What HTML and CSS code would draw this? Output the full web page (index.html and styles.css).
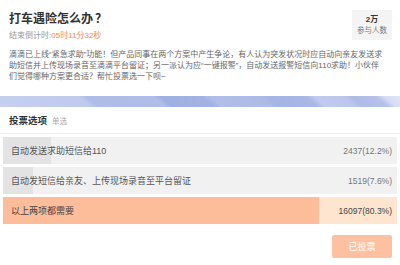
FILE: index.html
```html
<!DOCTYPE html>
<html lang="zh-CN">
<head>
<meta charset="utf-8">
<title>打车遇险怎么办？</title>
<link rel="stylesheet" href="styles.css">
</head>
<body>
<div class="page">
  <header class="head">
    <div class="head-top">
      <div class="title-block">
        <h1 class="title">打车遇险怎么办<span class="qmark">？</span></h1>
        <div class="countdown">结束倒计时:<span class="time">05时11分32秒</span></div>
      </div>
      <div class="stat"><b class="stat-num">2万</b><span class="stat-label">参与人数</span></div>
    </div>
    <p class="desc">滴滴已上线“紧急求助”功能！但产品同事在两个方案中产生争论，有人认为突发状况时应自动向亲友发送求<br>助短信并上传现场录音至滴滴平台留证；另一派认为应“一键报警”，自动发送报警短信向110求助！小伙伴<br>们觉得哪种方案更合适？帮忙投票选一下呗~</p>
  </header>
  <div class="banner"></div>
  <div class="vote-head"><b class="vote-title">投票选项</b><span class="vote-type">单选</span></div>
  <ul class="options">
    <li class="option">
      <div class="bar" style="width:12.2%"></div>
      <span class="opt-text">自动发送求助短信给110</span>
      <span class="opt-count">2437(12.2%)</span>
    </li>
    <li class="option">
      <div class="bar" style="width:7.6%"></div>
      <span class="opt-text">自动发短信给亲友、上传现场录音至平台留证</span>
      <span class="opt-count">1519(7.6%)</span>
    </li>
    <li class="option chosen">
      <div class="bar" style="width:80.3%"></div>
      <span class="opt-text">以上两项都需要</span>
      <span class="opt-count">16097(80.3%)</span>
    </li>
  </ul>
  <div class="actions"><button class="voted">已投票</button></div>
</div>
</body>
</html>
```

FILE: styles.css
```css
* { box-sizing: border-box; }
html, body { margin: 0; padding: 0; background: #fff; }
body {
  font-family: "Liberation Sans", "Noto Sans CJK SC", sans-serif;
  color: #555;
  width: 400px;
  height: 265px;
  overflow: hidden;
}
.head { padding: 10px 8px 0 9px; }
.head-top { display: flex; justify-content: space-between; align-items: flex-start; }
.title {
  margin: 0;
  font-family: "Noto Sans CJK SC", sans-serif;
  font-size: 12px;
  line-height: 16px;
  font-weight: bold;
  color: #333;
}
.qmark { margin-left: 2px; }
.countdown {
  margin-top: 4px;
  font-size: 8px;
  line-height: 12px;
  color: #999;
}
.time { color: #f2895a; }
.stat {
  width: 40px;
  height: 30px;
  background: #f4f4f4;
  display: flex;
  flex-direction: column;
  align-items: center;
  justify-content: center;
  gap: 1px;
}
.stat-num { font-size: 8px; line-height: 10px; color: #333; }
.stat-label { font-size: 7.5px; line-height: 10px; color: #777; }
.desc {
  margin: 7px 0 0;
  font-size: 8px;
  line-height: 11px;
  color: #666;
  white-space: nowrap;
}
.banner {
  margin-top: 14px;
  height: 11px;
  background: linear-gradient(40deg,
    #c6cfee 0%, #c0caed 22%, #afbce8 24%, #b0bde8 40%, #9eafe2 42%, #a2b2e3 52%,
    #b2bee9 54%, #adbae7 66%, #a4b4e4 68%, #a9b7e6 77%, #c2cbee 79%, #bcc6ec 86%,
    #afbce8 88%, #b6c1ea 94%, #d6ddf4 96%, #dfe4f6 100%);
}
.vote-head {
  height: 27px;
  display: flex;
  align-items: center;
  gap: 5px;
  padding-left: 9px;
  border-bottom: 1px solid #efefef;
}
.vote-title { font-size: 9.5px; color: #333; }
.vote-type { font-size: 7.5px; color: #aaa; }
.options {
  list-style: none;
  margin: 3px 3px 0;
  padding: 0;
  display: flex;
  flex-direction: column;
  gap: 3px;
}
.option {
  position: relative;
  height: 27px;
  background: #f1f1f2;
  display: flex;
  align-items: center;
  justify-content: space-between;
  padding: 0 5px 0 8px;
}
.bar {
  position: absolute;
  left: 0;
  top: 0;
  bottom: 0;
  background: #e3e3e4;
}
.opt-text, .opt-count { position: relative; }
.opt-text { font-size: 9px; color: #555; }
.opt-count { font-size: 8.5px; color: #777; }
.chosen { background: #fde5d0; }
.chosen .bar { background: #fdbc9a; }
.chosen .opt-text { color: #444; }
.chosen .opt-count { color: #444; }
.actions { display: flex; justify-content: flex-end; padding: 11px 8px 0 0; }
.voted {
  width: 60px;
  height: 23px;
  border: 0;
  border-radius: 2px;
  background: #fdc1a2;
  color: #fff;
  font-family: "Liberation Sans", "Noto Sans CJK SC", sans-serif;
  font-size: 9px;
  padding: 0;
}
```
